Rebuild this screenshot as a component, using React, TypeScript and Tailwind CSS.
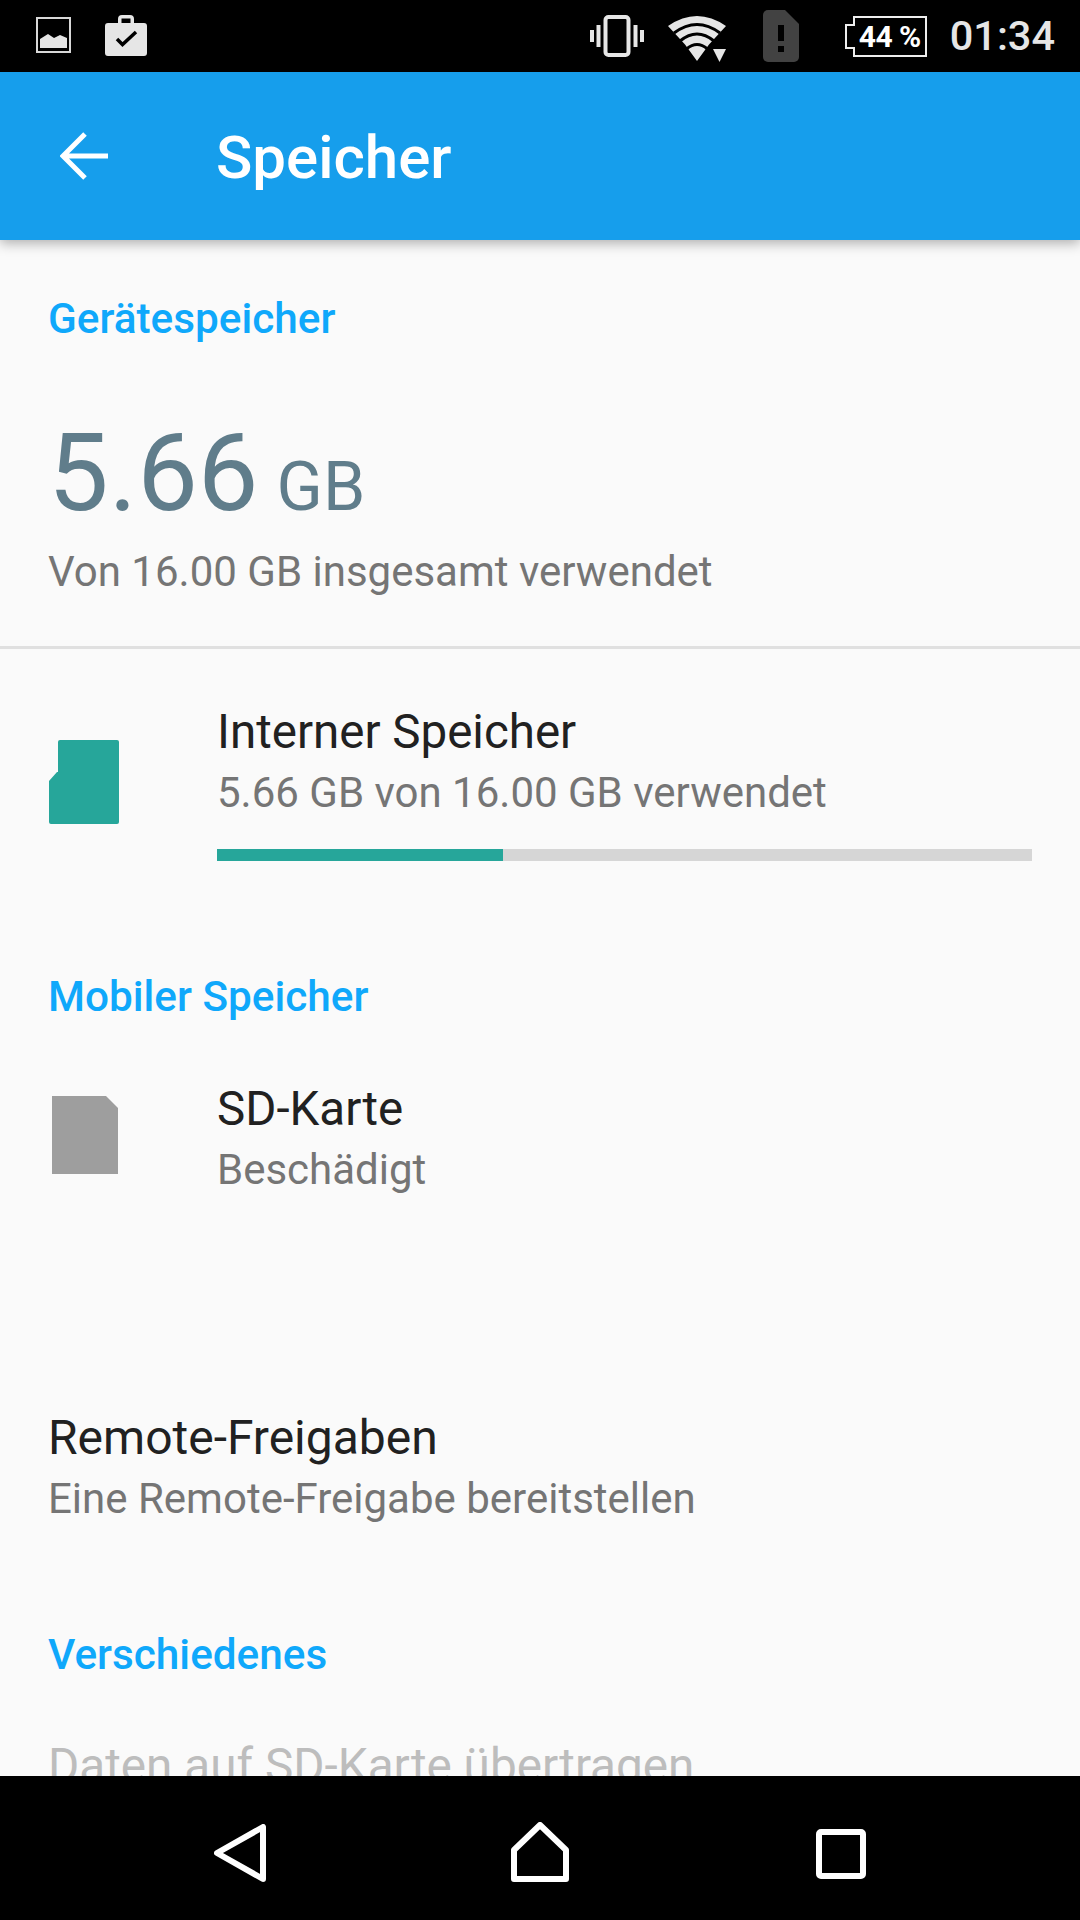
import React from "react";

function StatusBar() {
  return (
    <div className="h-[72px] bg-black flex items-center shrink-0 relative">
      <svg width="36" height="38" viewBox="0 0 36 38" className="ml-[36px]">
        <rect x="1" y="1" width="33" height="34" fill="none" stroke="#d8d8d8" strokeWidth="2" />
        <path d="M4 31V22L12 17L18 21L24 18L31 21V31Z" fill="#e4e4e4" />
      </svg>
      <svg width="42" height="42" viewBox="0 0 42 42" className="ml-[33px] mt-[-2px]">
        <path d="M3 9h10V5a4 4 0 0 1 4-4h8a4 4 0 0 1 4 4v4h10a3 3 0 0 1 3 3v27a3 3 0 0 1-3 3H3a3 3 0 0 1-3-3V12a3 3 0 0 1 3-3ZM16.500 9h9V4.500h-9Z" fill="#e6e6e6" fillRule="evenodd" />
        <path d="M12 25l5.500 5.500L31 18" fill="none" stroke="#000" strokeWidth="3.500" />
      </svg>
      <div className="flex-1" />
      <svg width="54" height="42" viewBox="0 0 54 42" className="mr-[24px]">
        <rect x="15.500" y="2" width="23" height="38" rx="3" fill="none" stroke="#e6e6e6" strokeWidth="4" />
        <path d="M8.500 10v22M2 15v12M45.500 10v22M52 15v12" stroke="#e6e6e6" strokeWidth="4" />
      </svg>
      <svg width="58" height="48" viewBox="0 0 58 48" className="mr-[37px] mt-[4px]">
        <path d="M0 12Q29-8 58 12L41 30.500L29 47L17 30.500Z" fill="#e6e6e6" />
        <path d="M6 19Q29 2 52 19M12 27Q29 13 46 27M18.500 35Q29 26 39.500 35" fill="none" stroke="#000" strokeWidth="3" />
        <path d="M45 35h13l-6.500 13Z" fill="#e6e6e6" />
      </svg>
      <svg width="36" height="52" viewBox="0 0 36 52" className="mr-[46px]">
        <path d="M5 0H22L36 14V47a5 5 0 0 1-5 5H5a5 5 0 0 1-5-5V5a5 5 0 0 1 5-5Z" fill="#424242" />
        <path d="M15 15h6v16h-6ZM15 36h6v6h-6Z" fill="#000" />
      </svg>
      <div className="relative w-[82px] h-[41px] mr-[23px] shrink-0">
        <svg width="82" height="41" viewBox="0 0 82 41" className="absolute inset-0">
          <path d="M9 1H81V40H9V32H1V9H9Z" fill="none" stroke="#eeeeee" strokeWidth="2" />
        </svg>
        <span className="absolute left-[14px] top-0 h-[41px] leading-[41px] text-[30px] font-bold text-white font-['Roboto',sans-serif] whitespace-nowrap tracking-[-0.5px]">
          44 %
        </span>
      </div>
      <span className="text-[41.5px] font-medium text-[#e6e6e6] font-['Roboto',sans-serif] mr-[25px]">01:34</span>
    </div>
  );
}

function AppBar() {
  return (
    <div className="h-[168px] bg-[#169eec] flex items-center shrink-0 relative z-10 shadow-[0_3px_12px_rgba(0,0,0,0.32)]">
      <svg width="48" height="48" viewBox="0 0 48 48" className="ml-[60px]">
        <path d="M48 24H3M25 2L3 24L25 46" fill="none" stroke="#fff" strokeWidth="5" />
      </svg>
      <span className="ml-[108px] text-[60px] font-medium text-white mt-[4px]">Speicher</span>
    </div>
  );
}

function SectionHeader({ children }: { children: React.ReactNode }) {
  return <div className="text-[42.3px] leading-[48px] font-medium text-[#0fa8fb] pl-[48px]">{children}</div>;
}

function NavBar() {
  return (
    <div className="h-[144px] bg-black shrink-0 relative">
      <svg width="54" height="58" viewBox="0 0 54 58" className="absolute left-[214px] top-[48px]">
        <path d="M49 3V55L3 29Z" fill="none" stroke="#fff" strokeWidth="6" strokeLinejoin="round" />
      </svg>
      <svg width="60" height="60" viewBox="0 0 60 60" className="absolute left-[510px] top-[46px]">
        <path d="M30 3L56 28V57H4V28Z" fill="none" stroke="#fff" strokeWidth="6" strokeLinejoin="round" />
      </svg>
      <svg width="50" height="50" viewBox="0 0 50 50" className="absolute left-[816px] top-[53px]">
        <rect x="3" y="3" width="44" height="44" rx="2" fill="none" stroke="#fff" strokeWidth="6" />
      </svg>
    </div>
  );
}

export default function App() {
  return (
    <div className="w-[1080px] h-[1920px] flex flex-col bg-[#fafafa] font-['Roboto',sans-serif] overflow-hidden">
      <StatusBar />
      <AppBar />
      <div className="flex-1 overflow-hidden">
        <div className="pt-[55px]">
          <SectionHeader>Gerätespeicher</SectionHeader>
        </div>
        <div className="pl-[48px] mt-[76px] flex items-baseline text-[#607d8b] h-[108px]">
          <span className="text-[108px] leading-[108px]">5.66</span>
          <span className="text-[68px] leading-[68px] ml-[18px]">GB</span>
        </div>
        <div className="pl-[48px] mt-[21px] text-[42px] leading-[48px] text-[#757575]">Von 16.00 GB insgesamt verwendet</div>
        <div className="h-[3px] bg-[#e0e0e0] mt-[50px]" />

        <div className="flex mt-[53px]">
          <div className="w-[217px] shrink-0 pl-[48px] pt-[38px]">
            <svg width="72" height="84" viewBox="0 0 72 84">
              <path d="M10 2a2 2 0 0 1 2-2H69a2 2 0 0 1 2 2V82a2 2 0 0 1-2 2H3a2 2 0 0 1-2-2V41L9 32H10Z" fill="#26a69a" />
            </svg>
          </div>
          <div className="flex-1 pr-[48px]">
            <div className="text-[47.5px] leading-[60px] text-[#212121]">Interner Speicher</div>
            <div className="text-[42px] leading-[60px] text-[#757575] mt-[1px]">5.66 GB von 16.00 GB verwendet</div>
            <div className="h-[12px] bg-[#d6d6d6] mt-[26px]">
              <div className="h-full w-[286px] bg-[#26a69a]" />
            </div>
          </div>
        </div>

        <div className="mt-[112px]">
          <SectionHeader>Mobiler Speicher</SectionHeader>
        </div>
        <div className="flex mt-[58px]">
          <div className="w-[217px] shrink-0 pl-[52px] pt-[17px]">
            <svg width="66" height="78" viewBox="0 0 66 78">
              <path d="M0 0H54L66 12V78H0Z" fill="#9e9e9e" />
            </svg>
          </div>
          <div>
            <div className="text-[47.5px] leading-[60px] text-[#212121]">SD-Karte</div>
            <div className="text-[42px] leading-[60px] text-[#757575] mt-[1px]">Beschädigt</div>
          </div>
        </div>

        <div className="pl-[48px] mt-[208px]">
          <div className="text-[48px] leading-[60px] text-[#212121]">Remote-Freigaben</div>
          <div className="text-[42px] leading-[60px] text-[#757575] mt-[1px]">Eine Remote-Freigabe bereitstellen</div>
        </div>

        <div className="mt-[102px]">
          <SectionHeader>Verschiedenes</SectionHeader>
        </div>
        <div className="pl-[48px] mt-[57px] text-[47.7px] leading-[60px] text-[#bdbdbd]">Daten auf SD-Karte übertragen</div>
      </div>
      <NavBar />
    </div>
  );
}
